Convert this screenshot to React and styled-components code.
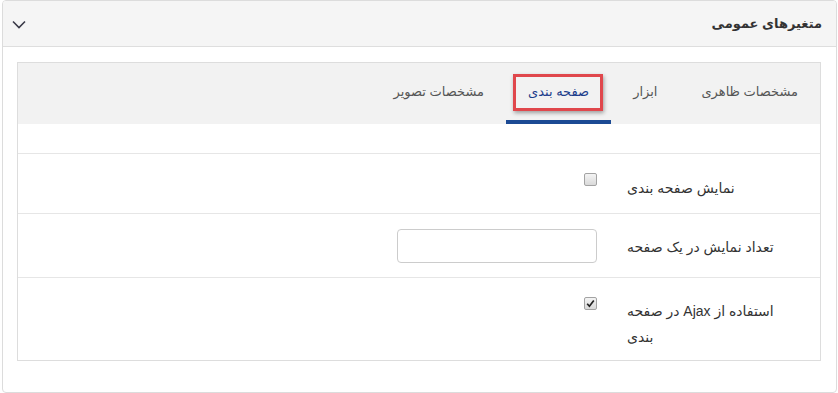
import React from "react";
import styled, { createGlobalStyle } from "styled-components";

const Global = createGlobalStyle`
  html, body { margin: 0; padding: 0; background: #fff; }
  body { font-family: "Liberation Sans", "DejaVu Sans", sans-serif; color: #333; }
  * { box-sizing: border-box; }
`;

const Panel = styled.div`
  margin-left: 2px;
  width: 835px;
  height: 393px;
  border: 1px solid #dcdcdc;
  border-radius: 4px;
  background: #fff;
  direction: rtl;
  display: flex;
  flex-direction: column;
  overflow: hidden;
`;

const Header = styled.div`
  height: 46px;
  flex: none;
  background: #f5f5f5;
  border-bottom: 1px solid #dedede;
  display: flex;
  align-items: center;
  justify-content: space-between;
  padding: 0 14px 0 8px;
`;

const Title = styled.h3`
  margin: 0;
  font-size: 13px;
  font-weight: bold;
  color: #333;
`;

const Toggle = styled.span`
  display: flex;
  width: 16px;
  height: 16px;
  align-items: center;
  justify-content: center;
  color: #3a3a48;
  margin-top: 1px;
`;

const Body = styled.div`
  padding: 15px 15px 31px 14px;
`;

const Box = styled.div`
  border: 1px solid #dddddd;
`;

const TabBar = styled.div`
  height: 61px;
  background: #f2f2f2;
  display: flex;
  align-items: stretch;
`;

const Tab = styled.div`
  position: relative;
  padding: 0 22px;
  display: flex;
  align-items: center;
  font-size: 13px;
  color: ${(p) => (p.$active ? "#1d3f8c" : "#555")};
  border-bottom: 4px solid ${(p) => (p.$active ? "#1c4a94" : "transparent")};
`;

const Highlight = styled.span`
  position: absolute;
  top: 11px;
  bottom: 9px;
  right: 8px;
  left: 7px;
  border: 3px solid #e0474c;
  box-shadow: 1px 2px 4px rgba(0, 0, 0, 0.35);
  pointer-events: none;
`;

const Spacer = styled.div`
  height: 30px;
  border-bottom: 1px solid #e6e6e6;
`;

const Row = styled.div`
  display: flex;
  align-items: flex-start;
  height: ${(p) => p.$h}px;
  padding: 15px 15px 0;
  border-bottom: ${(p) => (p.$last ? "none" : "1px solid #e6e6e6")};
`;

const Label = styled.label`
  width: 193px;
  flex: none;
  padding: ${(p) => p.$top}px 15px 0;
  font-size: 14px;
  line-height: 26px;
  text-align: left;
  color: #333;
`;

const Control = styled.div`
  flex: none;
  width: 215px;
  padding-right: 15px;
  display: flex;
`;

const Check = styled.span`
  margin-top: ${(p) => p.$mt}px;
  width: 13px;
  height: 13px;
  border: 1px solid #a3a3a3;
  border-radius: 2px;
  background: linear-gradient(#f4f4f4, #d9d9d9);
  display: flex;
  align-items: center;
  justify-content: center;
`;

const Input = styled.input`
  width: 200px;
  height: 34px;
  border: 1px solid #cccccc;
  border-radius: 4px;
  background: #fff;
  padding: 6px 12px;
  font: inherit;
  outline: none;
`;

const Chevron = () => (
  <svg width="14" height="9" viewBox="0 0 14 9" fill="none">
    <path d="M1 1.5 L7 7.5 L13 1.5" stroke="currentColor" strokeWidth="1.6" />
  </svg>
);

const Tick = () => (
  <svg width="9" height="9" viewBox="0 0 9 9">
    <path d="M1.2 4.8 L3.4 7.2 L7.8 1.4" stroke="#222" strokeWidth="1.7" fill="none" />
  </svg>
);

const tabs = ["مشخصات ظاهری", "ابزار", "صفحه بندی", "مشخصات تصویر"];

export default function App() {
  return (
    <>
      <Global />
      <Panel>
        <Header>
          <Title>متغیرهای عمومی</Title>
          <Toggle>
            <Chevron />
          </Toggle>
        </Header>
        <Body>
          <Box>
            <TabBar>
              {tabs.map((t, i) => (
                <Tab key={t} $active={i === 2}>
                  {t}
                  {i === 2 && <Highlight />}
                </Tab>
              ))}
            </TabBar>
            <Spacer />
            <Row $h={60}>
              <Label $top={6}>نمایش صفحه بندی</Label>
              <Control>
                <Check $mt={4} />
              </Control>
            </Row>
            <Row $h={64}>
              <Label $top={5}>تعداد نمایش در یک صفحه</Label>
              <Control>
                <Input type="text" />
              </Control>
            </Row>
            <Row $h={82} $last>
              <Label $top={5}>استفاده از Ajax در صفحه بندی</Label>
              <Control>
                <Check $mt={4}>
                  <Tick />
                </Check>
              </Control>
            </Row>
          </Box>
        </Body>
      </Panel>
    </>
  );
}
